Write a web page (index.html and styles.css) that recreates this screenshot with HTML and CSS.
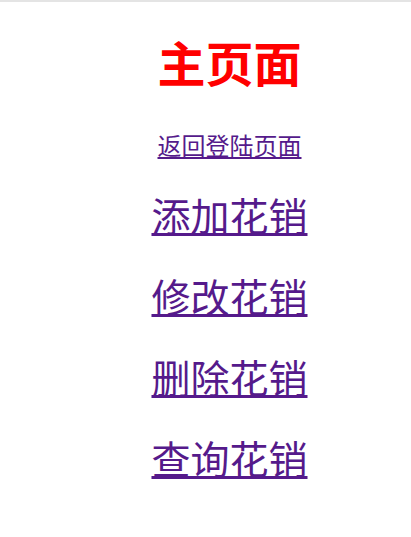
FILE: index.html
```html
<!DOCTYPE html>
<html>
<head>
<meta charset="utf-8">
<link rel="stylesheet" href="styles.css">
</head>
<body>
<div class="page">
  <h1 class="title">主页面</h1>
  <a class="back" href="#">返回登陆页面</a>
  <a class="action" href="#">添加花销</a>
  <a class="action" href="#">修改花销</a>
  <a class="action" href="#">删除花销</a>
  <a class="action" href="#">查询花销</a>
</div>
</body>
</html>
```
FILE: styles.css
```css
html, body {
  margin: 0;
  padding: 0;
  background: #fff;
}
body {
  border-top: 2px solid #e4e4e4;
  font-family: "Noto Sans CJK SC", "Noto Sans", sans-serif;
}
.page {
  display: flex;
  flex-direction: column;
  align-items: center;
  padding-top: 24px;
  padding-left: 48px;
}
.title {
  margin: 0;
  color: #ff0000;
  font-size: 48px;
  font-weight: bold;
  line-height: 70px;
}
a {
  color: #551a8b;
  text-decoration: underline;
}
.back {
  font-size: 24px;
  line-height: 34px;
  margin-top: 32px;
}
.action {
  font-size: 39px;
  line-height: 56px;
  margin-top: 24px;
}
.action + .action {
  margin-top: 25px;
}
```
